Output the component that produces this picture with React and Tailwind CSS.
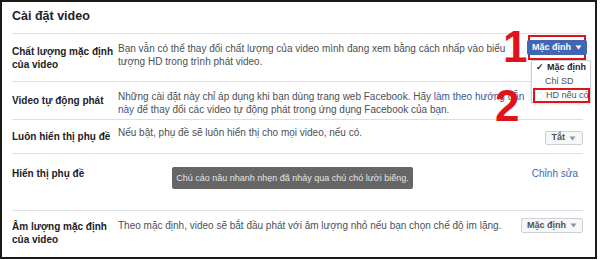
import React from "react";

const font = { fontFamily: '"Liberation Sans", Arial, sans-serif' };

function Caret({ className = "" }) {
  return (
    <svg width="7" height="5" viewBox="0 0 7 5" className={className}>
      <path d="M0.5 0.5 L6.5 0.5 L3.5 4.5 Z" fill="currentColor" />
    </svg>
  );
}

function Row({ h, label, children, right, labelTop }) {
  return (
    <div className={`flex border-t border-[#dddfe2] ${h}`}>
      <div className={`w-[106px] shrink-0 flex whitespace-nowrap ${labelTop ? "items-start pt-[13px]" : "items-center"} text-[10px] font-bold leading-[13px] text-[#1d2129]`}>
        <div>{label}</div>
      </div>
      <div className="flex-1 min-w-0 pt-[8px] text-[10px] leading-[13px] text-[#4b4f56] whitespace-nowrap">{children}</div>
      <div className="w-[60px] shrink-0 flex justify-end whitespace-nowrap">{right}</div>
    </div>
  );
}

export default function App() {
  return (
    <div className="w-[600px] h-[260px] bg-white" style={font}>
      <div className="relative w-[597px] h-[259px] border-2 border-[#1a1a1a] bg-white pl-[10px] pr-[12px]">
        <div className="h-[31px] flex items-center text-[12.5px] font-bold text-[#1d2129] pb-[2px]">
          Cài đặt video
        </div>
        <Row h="h-[48px]" label={<>Chất lượng mặc định<br />của video</>}>
          Bạn vẫn có thể thay đổi chất lượng của video mình đang xem bằng cách nhấp vào biểu
          <br />
          tượng HD trong trình phát video.
        </Row>
        <Row h="h-[38px]" label="Video tự động phát">
          Những cài đặt này chỉ áp dụng khi bạn dùng trang web Facebook. Hãy{" "}
          <span className="text-[#365899]">làm theo hướng dẫn</span>
          <br />
          <span className="text-[#365899]">này</span> để thay đổi các video tự động phát trong ứng dụng Facebook của bạn.
        </Row>
        <Row
          h="h-[34px]"
          label="Luôn hiển thị phụ đề"
          right={
            <div className="mt-[11px] h-[14px] px-[6px] flex items-center gap-[4px] bg-[#f6f7f9] border border-[#ced0d4] rounded-[2px] text-[9px] font-bold text-[#4b4f56]">
              Tắt <Caret className="text-[#90949c]" />
            </div>
          }
        >
          <div className="-mt-[2px]">Nếu bật, phụ đề sẽ luôn hiển thị cho mọi video, nếu có.</div>
        </Row>
        <Row
          h="h-[57px]"
          label="Hiển thị phụ đề"
          labelTop
          right={
            <div className="pt-[12px] pr-[5px] text-[10px] text-[#4267b2]">Chỉnh sửa</div>
          }
        >
          <div className="pl-[54px] pt-[5px]">
            <div
              className="w-[241px] h-[22px] flex items-center justify-center rounded-[2px] text-[9px] text-[#e4e4e4] overflow-hidden"
              style={{
                backgroundColor: "#6a6a6a",
                backgroundImage:
                  "linear-gradient(45deg, #626262 25%, transparent 25%, transparent 75%, #626262 75%), linear-gradient(45deg, #626262 25%, transparent 25%, transparent 75%, #626262 75%)",
                backgroundSize: "4px 4px",
                backgroundPosition: "0 0, 2px 2px",
              }}
            >
              Chú cáo nâu nhanh nhẹn đã nhảy qua chú chó lười biếng.
            </div>
          </div>
        </Row>
        <Row
          h="h-[45px]"
          label={<>Âm lượng mặc định<br />của video</>}
          right={
            <div className="mt-[7px] h-[15px] px-[5px] flex items-center gap-[4px] bg-[#f6f7f9] border border-[#ced0d4] rounded-[2px] text-[9px] font-bold text-[#4b4f56]">
              Mặc định <Caret className="text-[#90949c]" />
            </div>
          }
        >
          Theo mặc định, video sẽ bắt đầu phát với âm lượng nhỏ nếu bạn chọn chế độ im lặng.
        </Row>

        {/* Annotations */}
        <div className="absolute left-[526px] top-[33px] w-[58px] h-[25px] border-2 border-[#e0131b] flex items-center justify-center whitespace-nowrap">
          <div className="h-[15px] px-[5px] flex items-center gap-[4px] bg-[#4267b2] rounded-[2px] text-[9px] font-bold text-white">
            Mặc định <Caret />
          </div>
        </div>
        <div className="absolute left-[529px] top-[58px] w-[60px] h-[43px] bg-white border border-[#ccd0d5] shadow-sm text-[9px] text-[#1d2129] whitespace-nowrap">
          <div className="flex items-center h-[14px] pl-[4px] font-bold gap-[3px]">
            <span className="text-[9px]">✓</span>Mặc định
          </div>
          <div className="flex items-center h-[14px] pl-[13px] text-[#4b4f56]">Chỉ SD</div>
        </div>
        <div className="absolute left-[531px] top-[86px] w-[57px] h-[15px] border-2 border-[#e0131b] bg-white flex items-center pl-[11px] text-[9px] text-[#4b4f56] whitespace-nowrap">
          HD nếu có
        </div>
        <div className="absolute left-[501px] top-[23px] text-[44px] font-bold leading-none text-[#e0131b]">
          1
        </div>
        <div className="absolute left-[493px] top-[82px] text-[44px] font-bold leading-none text-[#e0131b]">
          2
        </div>
      </div>
    </div>
  );
}
